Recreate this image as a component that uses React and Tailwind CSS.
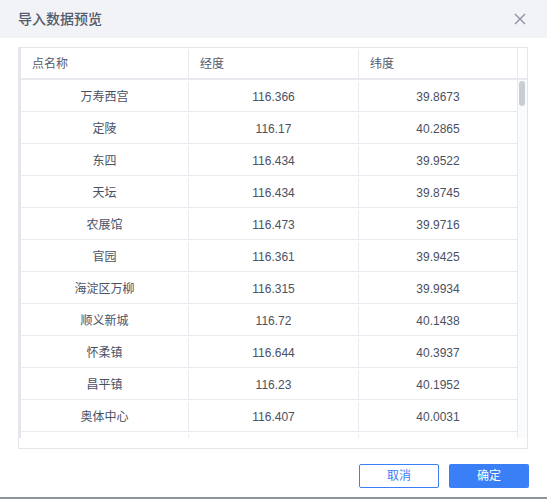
import React from "react";

const rows = [
  ["万寿西宫", "116.366", "39.8673"],
  ["定陵", "116.17", "40.2865"],
  ["东四", "116.434", "39.9522"],
  ["天坛", "116.434", "39.8745"],
  ["农展馆", "116.473", "39.9716"],
  ["官园", "116.361", "39.9425"],
  ["海淀区万柳", "116.315", "39.9934"],
  ["顺义新城", "116.72", "40.1438"],
  ["怀柔镇", "116.644", "40.3937"],
  ["昌平镇", "116.23", "40.1952"],
  ["奥体中心", "116.407", "40.0031"],
  // next row is scrolled out of view
  ["", "", ""],
];

function Row({ name, lng, lat }) {
  return (
    <div className="flex h-[32px] border-b border-[#e8eaef] pt-[2px] text-[12px] text-[#4a5163]">
      <div className="flex w-[168px] shrink-0 items-center justify-center border-r border-[#e8eaef]">{name}</div>
      <div className="flex w-[170px] shrink-0 items-center justify-center border-r border-[#e8eaef]">{lng}</div>
      <div className="flex flex-1 items-center justify-center">{lat}</div>
    </div>
  );
}

export default function App() {
  return (
    <div
      className="h-[499px] w-[547px] overflow-hidden border-b-2 border-[#8e939c] bg-white"
      style={{ fontFamily: '"Liberation Sans", "Noto Sans CJK SC", sans-serif' }}
    >
      {/* header */}
      <div className="flex h-[38px] items-center justify-between bg-[#f2f3f6] pl-[18px] pr-[21px]">
        <span className="text-[14px] font-medium text-[#535a6b]">导入数据预览</span>
        <svg width="12" height="12" viewBox="0 0 12 12" className="text-[#868c9b]">
          <path d="M1 1L11 11M11 1L1 11" stroke="currentColor" strokeWidth="1.2" />
        </svg>
      </div>

      <div className="px-[18px] pt-[9px]">
        {/* table */}
        <div className="h-[402px] w-[510px] border border-[#e4e6eb] pb-[10px]">
          <div className="flex h-full">
            <div className="flex w-[498px] flex-col border-l-2 border-[#e4e6eb]">
              <div className="flex h-[32px] shrink-0 border-b-2 border-[#e8eaef] pt-[1px] text-[12px] text-[#555c6d]">
                <div className="flex w-[168px] shrink-0 items-center border-r border-[#e8eaef] pl-[11px]">点名称</div>
                <div className="flex w-[170px] shrink-0 items-center border-r border-[#e8eaef] pl-[11px]">经度</div>
                <div className="flex flex-1 items-center pl-[11px]">纬度</div>
              </div>
              <div className="flex-1 overflow-hidden">
                {rows.map((r, i) => (
                  <Row key={i} name={r[0]} lng={r[1]} lat={r[2]} />
                ))}
              </div>
            </div>
            <div className="flex w-[10px] flex-col border-l border-[#e8eaef]">
              <div className="h-[32px] shrink-0 border-b-2 border-[#e8eaef]" />
              <div className="flex-1 bg-[#fafbfc] px-[1px] pt-[1px]">
                <div className="h-[25px] w-[6px] rounded-full bg-[#c9cdd5]" />
              </div>
            </div>
          </div>
        </div>

        {/* footer */}
        <div className="mt-[15px] flex justify-end gap-[10px]">
          <button className="h-[24px] w-[80px] rounded-[2px] border border-[#3b80f6] bg-white text-[12px] text-[#3b80f6]">
            取消
          </button>
          <button className="h-[24px] w-[80px] rounded-[2px] bg-[#3a7ff6] text-[12px] text-white">
            确定
          </button>
        </div>
      </div>
    </div>
  );
}
